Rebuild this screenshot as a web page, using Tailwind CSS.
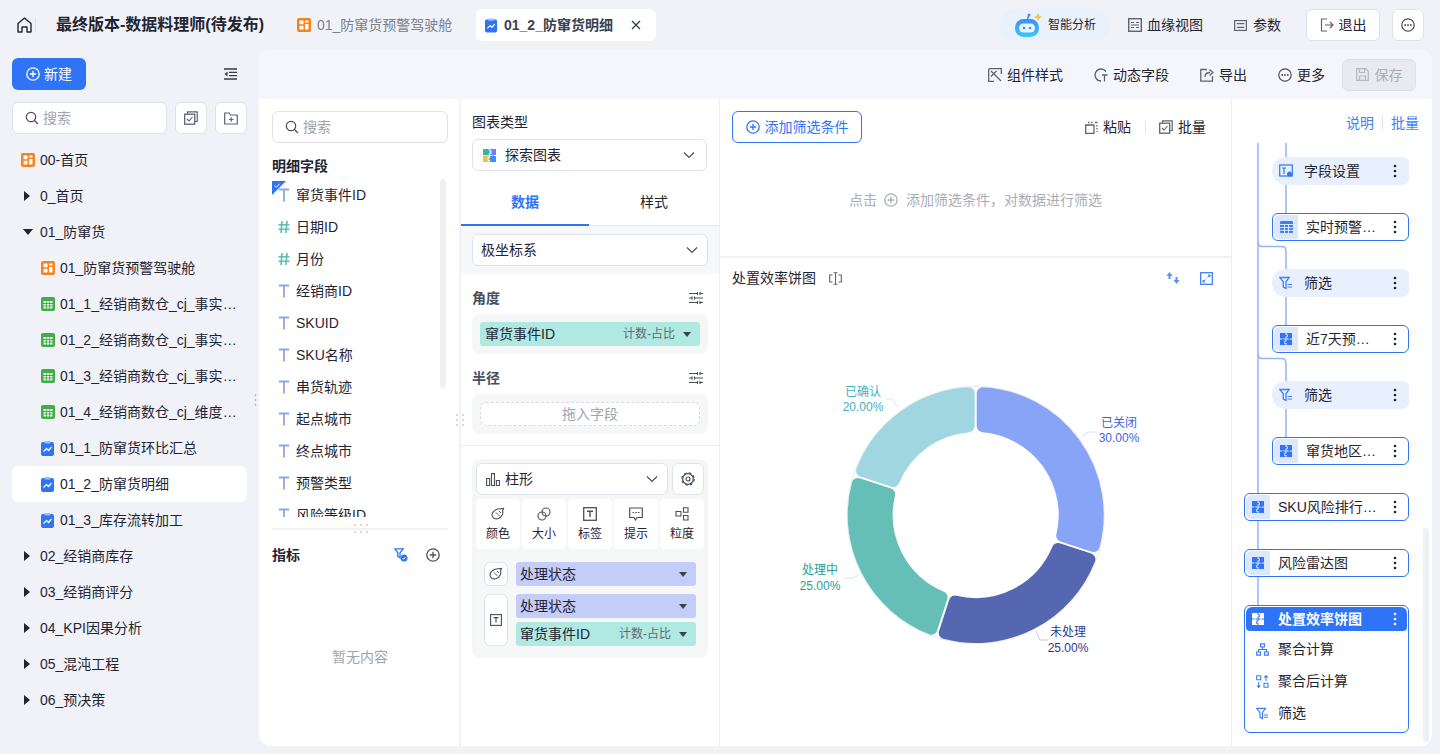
<!DOCTYPE html>
<html lang="zh-CN">
<head>
<meta charset="UTF-8">
<title>最终版本-数据料理师(待发布)</title>
<script src="https://cdn.jsdelivr.net/npm/@tailwindcss/browser@4"></script>
</head>
<body class="relative h-[754px] w-[1440px] overflow-hidden bg-[#f0f2f8] font-['Liberation_Sans','Noto_Sans_CJK_SC',sans-serif] text-sm text-[#1f2533]">

<!-- icon sprite -->
<svg class="hidden">
  <symbol id="i-dash" viewBox="0 0 14 14"><rect width="14" height="14" rx="2" fill="#f58220"/><path d="M2.500 2.500h4v3.800h-4zM8 2.500h3.500v2H8zM8 6h3.500v5.500H8zM2.500 7.800h4v3.700h-4z" fill="#fff"/></symbol>
  <symbol id="i-table" viewBox="0 0 14 14"><rect width="14" height="14" rx="2" fill="#3fae49"/><path d="M2.500 4h9v7.500h-9z" fill="#fff"/><path d="M2 6.500h10M2 9h10M5.300 4v8M8.700 4v8" stroke="#3fae49" stroke-width="1"/></symbol>
  <symbol id="i-chart" viewBox="0 0 14 15"><rect y="1" width="13" height="14" rx="2" fill="#2f74f6"/><rect x="3.500" width="6" height="2.500" rx="1" fill="#9dbdf9"/><path d="M2.500 10.500l3-3 2 2 3-3.500" fill="none" stroke="#fff" stroke-width="1.200"/></symbol>
  <symbol id="i-t" viewBox="0 0 12 14"><path d="M1 1.500h10M6 1.500v12" fill="none" stroke="#8ea8e0" stroke-width="1.800"/></symbol>
  <symbol id="i-hash" viewBox="0 0 12 14"><path d="M4 1L3 13M9 1L8 13M.5 4.800h11M.5 9.200h11" fill="none" stroke="#5bbcb0" stroke-width="1.600"/></symbol>
  <symbol id="i-search" viewBox="0 0 14 14"><circle cx="6" cy="6" r="4.700" fill="none" stroke="currentColor" stroke-width="1.200"/><path d="M9.500 9.500L13 13" stroke="currentColor" stroke-width="1.200"/></symbol>
  <symbol id="i-plus" viewBox="0 0 14 14"><circle cx="7" cy="7" r="6.200" fill="none" stroke="currentColor" stroke-width="1.300"/><path d="M3.800 7h6.400M7 3.800v6.400" stroke="currentColor" stroke-width="1.300"/></symbol>
  <symbol id="i-more" viewBox="0 0 14 14"><circle cx="7" cy="7" r="6.200" fill="none" stroke="currentColor" stroke-width="1.200"/><circle cx="4.200" cy="7" r=".9" fill="currentColor"/><circle cx="7" cy="7" r=".9" fill="currentColor"/><circle cx="9.800" cy="7" r=".9" fill="currentColor"/></symbol>
  <symbol id="i-batch" viewBox="0 0 14 14"><path d="M3.500 3V.8h9.700v9.700H11" fill="none" stroke="currentColor" stroke-width="1.200"/><rect x=".7" y="3.200" width="10" height="10" fill="none" stroke="currentColor" stroke-width="1.300"/><path d="M3 8l2 2 3.500-4" fill="none" stroke="currentColor" stroke-width="1.100"/></symbol>
  <symbol id="i-tune" viewBox="0 0 14 14"><path d="M0 2.500h8.500M11 2.500h3M0 7h3M5.500 7h8.500M0 11.500h8.500M11 11.500h3M8.500 1v3M11 1v3M3 5.500v3M5.500 5.500v3M8.500 10v3M11 10v3" fill="none" stroke="currentColor" stroke-width="1.200"/></symbol>
  <symbol id="i-chev" viewBox="0 0 12 8"><path d="M1 1.500l5 5 5-5" fill="none" stroke="currentColor" stroke-width="1.200"/></symbol>
  <symbol id="i-puzzle" viewBox="0 0 12 12"><g fill="currentColor"><path d="M0 0H5.500V2H6.800V3.500H5.500V5.500H0Z"/><path d="M6.500 0H12V5.500H10V6.200H8.500V5.500H6.500V4.300H7.800V1.200H6.500Z"/><path d="M0 0H5.500V2H6.800V3.500H5.500V5.500H0Z" transform="rotate(180 6 6)"/><path d="M6.500 0H12V5.500H10V6.200H8.500V5.500H6.500V4.300H7.800V1.200H6.500Z" transform="rotate(180 6 6)"/></g></symbol>
  <symbol id="i-filter" viewBox="0 0 14 14"><path d="M.8 1.500h9.400L7 5.800V12.500L4.300 11V5.800z" fill="none" stroke="currentColor" stroke-width="1.300"/><path d="M8.500 8.500h4.500M8.500 11h4.500" stroke="currentColor" stroke-width="1.100"/></symbol>
  <symbol id="i-palette" viewBox="0 0 14 14"><path d="M1 8c0-3 3-5.500 6-6l5.500-.5-1 2.500c1 2-.5 6-4 7.500C4 12.500 1 11 1 8z" fill="none" stroke="currentColor" stroke-width="1.100"/><path d="M5 5.500l3.500 3.500M8 4l2 2" stroke="currentColor" stroke-width=".9"/></symbol>
  <symbol id="i-box-t" viewBox="0 0 14 14"><rect x=".7" y=".7" width="12.600" height="12.600" fill="none" stroke="currentColor" stroke-width="1.300"/><path d="M4 4.300h6M7 4.300v5.700" fill="none" stroke="currentColor" stroke-width="1.400"/></symbol>
  <symbol id="i-dots" viewBox="0 0 4 14"><circle cx="2" cy="2" r="1.300" fill="currentColor"/><circle cx="2" cy="7" r="1.300" fill="currentColor"/><circle cx="2" cy="12" r="1.300" fill="currentColor"/></symbol>
</svg>

<!-- top bar -->
<header class="flex h-[50px] items-center">
  <svg class="ml-[17px] h-[16px] w-[15px]" viewBox="0 0 15 16"><path d="M1 6.500L7.500 1 14 6.500V15h-4V10H5v5H1z" fill="none" stroke="#1f2533" stroke-width="1.400" stroke-linejoin="round"/></svg>
  <span class="ml-[3px] h-[14px] w-px bg-[#e2e4ec]"></span>
  <h1 class="ml-[20px] w-[208px] text-base font-semibold whitespace-nowrap">最终版本-数据料理师(待发布)</h1>
  <div class="ml-[33px] flex w-[155px] items-center gap-[6px] text-[#7b808c]">
    <svg class="h-[14px] w-[14px] shrink-0"><use href="#i-dash"/></svg>
    <span class="whitespace-nowrap">01_防窜货预警驾驶舱</span>
  </div>
  <div class="ml-[24px] flex h-[32px] w-[180px] items-center rounded-md bg-white pl-[9px]">
    <svg class="h-[15px] w-[13px] shrink-0"><use href="#i-chart"/></svg>
    <span class="ml-[6px] w-[110px] overflow-hidden font-semibold whitespace-nowrap text-[#3b4150]">01_2_防窜货明细</span>
    <svg class="ml-[17px] h-[10px] w-[10px]" viewBox="0 0 10 10"><path d="M1 1l8 8M9 1L1 9" stroke="#333a48" stroke-width="1.200"/></svg>
  </div>
  <div class="ml-[344px] flex h-[32px] w-[110px] items-center rounded-2xl bg-[#e9f1fc] pl-[14px]">
    <svg class="h-[26px] w-[29px] shrink-0" viewBox="0 0 29 26">
      <defs><linearGradient id="rb" x1="0" y1="0" x2="0" y2="1"><stop offset="0" stop-color="#3d8ef8"/><stop offset="1" stop-color="#3cc8f6"/></linearGradient></defs>
      <path d="M13 8L15 3" stroke="#3d8ef8" stroke-width="1.500"/><circle cx="15" cy="3" r="1.500" fill="#3d8ef8"/>
      <path d="M24 1l1.200 2.800L28 5l-2.800 1.200L24 9l-1.200-2.800L20 5l2.800-1.200z" fill="#f8c13a"/>
      <rect x="1" y="7" width="24" height="18" rx="8.500" fill="url(#rb)"/>
      <rect x="5" y="11.500" width="16" height="9" rx="4.500" fill="#e8f5fe"/>
      <circle cx="10" cy="16" r="1.300" fill="#3d8ef8"/><circle cx="16" cy="16" r="1.300" fill="#3d8ef8"/>
    </svg>
    <span class="ml-[5px] text-xs whitespace-nowrap">智能分析</span>
  </div>
  <div class="ml-[18px] flex items-center gap-[5px]">
    <svg class="h-[14px] w-[14px]" viewBox="0 0 14 14"><rect x=".7" y=".7" width="12.600" height="12.600" fill="none" stroke="#5d6370" stroke-width="1.400"/><path d="M3 4.500h3M3 9.500h3M8 4.500h3M8 9.500h3M3 7h8" stroke="#5d6370" stroke-width="1.200"/></svg>
    <span>血缘视图</span>
  </div>
  <div class="ml-[31px] flex items-center gap-[6px]">
    <svg class="h-[13px] w-[13px]" viewBox="0 0 14 14"><rect x=".7" y="1.700" width="12.600" height="10.600" fill="none" stroke="#5d6370" stroke-width="1.300"/><path d="M3 5h8M3 9h8" stroke="#5d6370" stroke-width="1.200"/></svg>
    <span>参数</span>
  </div>
  <button class="ml-[25px] flex h-[32px] w-[74px] items-center justify-center gap-[5px] rounded-md border border-[#dfe2ea] bg-white">
    <svg class="h-[14px] w-[14px]" viewBox="0 0 14 14"><path d="M7 1H1.500v12H7M5 7h8M10 4l3 3-3 3" fill="none" stroke="#5d6370" stroke-width="1.200"/></svg>
    <span>退出</span>
  </button>
  <button class="ml-[12px] flex h-[32px] w-[32px] items-center justify-center rounded-md border border-[#dfe2ea] bg-white text-[#4a4f5c]">
    <svg class="h-[14px] w-[14px]"><use href="#i-more"/></svg>
  </button>
</header>

<div class="flex">
  <!-- sidebar -->
  <aside class="relative w-[259px] shrink-0 px-[12px] pt-[8px]">
    <div class="flex items-center justify-between">
      <button class="flex h-[32px] w-[74px] items-center justify-center gap-[4px] rounded-md bg-[#2f74f6] text-white">
        <svg class="h-[14px] w-[14px]"><use href="#i-plus"/></svg>新建
      </button>
      <svg class="mr-[10px] h-[12px] w-[13px]" viewBox="0 0 13 12"><path d="M0 1h13M5 4.300h8M5 7.700h8M0 11h13" stroke="#333a48" stroke-width="1.300"/><path d="M3.500 3.500L.5 6l3 2.500z" fill="#333a48"/></svg>
    </div>
    <div class="mt-[12px] flex gap-[8px]">
      <div class="flex h-[32px] w-[155px] items-center gap-[4px] rounded-md border border-[#dfe2ea] bg-white pl-[12px] text-[#a0a4ad]">
        <svg class="h-[14px] w-[14px] text-[#4a4f5c]"><use href="#i-search"/></svg>搜索
      </div>
      <button class="flex h-[32px] w-[32px] items-center justify-center rounded-md border border-[#dfe2ea] bg-white text-[#5d6370]"><svg class="h-[14px] w-[14px]"><use href="#i-batch"/></svg></button>
      <button class="flex h-[32px] w-[32px] items-center justify-center rounded-md border border-[#dfe2ea] bg-white">
        <svg class="h-[13px] w-[14px]" viewBox="0 0 14 13"><path d="M.7 1h4.500l1.300 2h6.800v9H.7z" fill="none" stroke="#5d6370" stroke-width="1.200"/><path d="M5 7.500h4.500M7.200 5.200v4.600" stroke="#5d6370" stroke-width="1.200"/></svg>
      </button>
    </div>
    <ul class="mt-[8px]">
      <li class="flex h-[36px] items-center pl-[9px]"><svg class="h-[14px] w-[14px] shrink-0"><use href="#i-dash"/></svg><span class="ml-[5px]">00-首页</span></li>
      <li class="flex h-[36px] items-center pl-[9px]"><span class="ml-[3px] h-0 w-0 border-y-[5px] border-l-[6px] border-y-transparent border-l-[#1f2533]"></span><span class="ml-[10px]">0_首页</span></li>
      <li class="flex h-[36px] items-center pl-[9px]"><span class="ml-[2px] h-0 w-0 border-x-[5px] border-t-[6px] border-x-transparent border-t-[#1f2533]"></span><span class="ml-[7px]">01_防窜货</span></li>
      <li class="flex h-[36px] items-center pl-[29px]"><svg class="h-[14px] w-[14px] shrink-0"><use href="#i-dash"/></svg><span class="ml-[5px]">01_防窜货预警驾驶舱</span></li>
      <li class="flex h-[36px] items-center pl-[29px]"><svg class="h-[14px] w-[14px] shrink-0"><use href="#i-table"/></svg><span class="ml-[5px] w-[177px] truncate">01_1_经销商数仓_cj_事实表明细</span></li>
      <li class="flex h-[36px] items-center pl-[29px]"><svg class="h-[14px] w-[14px] shrink-0"><use href="#i-table"/></svg><span class="ml-[5px] w-[177px] truncate">01_2_经销商数仓_cj_事实表汇总</span></li>
      <li class="flex h-[36px] items-center pl-[29px]"><svg class="h-[14px] w-[14px] shrink-0"><use href="#i-table"/></svg><span class="ml-[5px] w-[177px] truncate">01_3_经销商数仓_cj_事实表预警</span></li>
      <li class="flex h-[36px] items-center pl-[29px]"><svg class="h-[14px] w-[14px] shrink-0"><use href="#i-table"/></svg><span class="ml-[5px] w-[177px] truncate">01_4_经销商数仓_cj_维度表信息</span></li>
      <li class="flex h-[36px] items-center pl-[29px]"><svg class="h-[15px] w-[14px] shrink-0"><use href="#i-chart"/></svg><span class="ml-[5px]">01_1_防窜货环比汇总</span></li>
      <li class="flex h-[36px] items-center rounded-md bg-white pl-[29px]"><svg class="h-[15px] w-[14px] shrink-0"><use href="#i-chart"/></svg><span class="ml-[5px]">01_2_防窜货明细</span></li>
      <li class="flex h-[36px] items-center pl-[29px]"><svg class="h-[15px] w-[14px] shrink-0"><use href="#i-chart"/></svg><span class="ml-[5px]">01_3_库存流转加工</span></li>
      <li class="flex h-[36px] items-center pl-[9px]"><span class="ml-[3px] h-0 w-0 border-y-[5px] border-l-[6px] border-y-transparent border-l-[#1f2533]"></span><span class="ml-[10px]">02_经销商库存</span></li>
      <li class="flex h-[36px] items-center pl-[9px]"><span class="ml-[3px] h-0 w-0 border-y-[5px] border-l-[6px] border-y-transparent border-l-[#1f2533]"></span><span class="ml-[10px]">03_经销商评分</span></li>
      <li class="flex h-[36px] items-center pl-[9px]"><span class="ml-[3px] h-0 w-0 border-y-[5px] border-l-[6px] border-y-transparent border-l-[#1f2533]"></span><span class="ml-[10px]">04_KPI因果分析</span></li>
      <li class="flex h-[36px] items-center pl-[9px]"><span class="ml-[3px] h-0 w-0 border-y-[5px] border-l-[6px] border-y-transparent border-l-[#1f2533]"></span><span class="ml-[10px]">05_混沌工程</span></li>
      <li class="flex h-[36px] items-center pl-[9px]"><span class="ml-[3px] h-0 w-0 border-y-[5px] border-l-[6px] border-y-transparent border-l-[#1f2533]"></span><span class="ml-[10px]">06_预决策</span></li>
    </ul>
    <!-- resize handle -->
    <svg class="absolute top-[344px] left-[254px] h-[12px] w-[3px]" viewBox="0 0 3 12" fill="#9a9ea8"><circle cx="1.500" cy="1" r=".8"/><circle cx="1.500" cy="6" r=".8"/><circle cx="1.500" cy="11" r=".8"/></svg>
  </aside>

  <!-- main panel -->
  <main class="h-[696px] w-[1173px] overflow-hidden rounded-xl bg-white">
    <div class="flex h-[49px] items-center bg-[#f5f6fb]">
      <div class="ml-[729px] flex items-center gap-[5px]">
        <svg class="h-[14px] w-[14px]" viewBox="0 0 14 14"><path d="M.7.700h12.600V6M.7.700V13.300H6M3 3l10 10M3 8.500L8.500 3" fill="none" stroke="#5d6370" stroke-width="1.300"/></svg><span>组件样式</span>
      </div>
      <div class="ml-[31px] flex items-center gap-[5px]">
        <svg class="h-[14px] w-[14px]" viewBox="0 0 14 14"><path d="M12 3.500A6 6 0 1 0 7 13M8 7h5.500M10.500 7v6.500" fill="none" stroke="#5d6370" stroke-width="1.300"/></svg><span>动态字段</span>
      </div>
      <div class="ml-[31px] flex items-center gap-[5px]">
        <svg class="h-[14px] w-[14px]" viewBox="0 0 14 14"><path d="M7 1.500H.8v11.700h11.700V8M5 9c0-3 2-4.500 5-4.500M9.500 1.500l3.500 3-3.500 3" fill="none" stroke="#5d6370" stroke-width="1.300"/></svg><span>导出</span>
      </div>
      <div class="ml-[31px] flex items-center gap-[5px] text-[#4a4f5c]">
        <svg class="h-[14px] w-[14px]"><use href="#i-more"/></svg><span class="text-[#1f2533]">更多</span>
      </div>
      <button class="ml-[17px] flex h-[32px] w-[74px] items-center justify-center gap-[6px] rounded-md border border-[#dfe1e7] bg-[#e9eaef] text-[#a9adb6]">
        <svg class="h-[13px] w-[13px]" viewBox="0 0 13 13"><path d="M.7.700h9l2.600 2.600v9H.7zM3.500.700v3.800h5V.700M3.500 12.300V8h6v4.300" fill="none" stroke="#b4b7bf" stroke-width="1.200"/></svg>保存
      </button>
    </div>

    <div class="flex h-[647px]">
      <!-- field list -->
      <section class="relative w-[202px] shrink-0 border-r-2 border-[#f1f2f6] pl-[13px]">
        <div class="mt-[12px] flex h-[32px] w-[176px] items-center gap-[4px] rounded-md border border-[#dfe2ea] pl-[12px] text-[#a0a4ad]">
          <svg class="h-[14px] w-[14px] text-[#4a4f5c]"><use href="#i-search"/></svg>搜索
        </div>
        <h3 class="mt-[13px] h-[20px] leading-[20px] font-semibold">明细字段</h3>
        <div class="relative mt-[3px] h-[338px] overflow-hidden">
          <ul class="pl-[6px]">
            <li class="flex h-[32px] items-center"><svg class="h-[14px] w-[12px] shrink-0"><use href="#i-t"/></svg><span class="ml-[6px]">窜货事件ID</span></li>
            <li class="flex h-[32px] items-center"><svg class="h-[14px] w-[12px] shrink-0"><use href="#i-hash"/></svg><span class="ml-[6px]">日期ID</span></li>
            <li class="flex h-[32px] items-center"><svg class="h-[14px] w-[12px] shrink-0"><use href="#i-hash"/></svg><span class="ml-[6px]">月份</span></li>
            <li class="flex h-[32px] items-center"><svg class="h-[14px] w-[12px] shrink-0"><use href="#i-t"/></svg><span class="ml-[6px]">经销商ID</span></li>
            <li class="flex h-[32px] items-center"><svg class="h-[14px] w-[12px] shrink-0"><use href="#i-t"/></svg><span class="ml-[6px]">SKUID</span></li>
            <li class="flex h-[32px] items-center"><svg class="h-[14px] w-[12px] shrink-0"><use href="#i-t"/></svg><span class="ml-[6px]">SKU名称</span></li>
            <li class="flex h-[32px] items-center"><svg class="h-[14px] w-[12px] shrink-0"><use href="#i-t"/></svg><span class="ml-[6px]">串货轨迹</span></li>
            <li class="flex h-[32px] items-center"><svg class="h-[14px] w-[12px] shrink-0"><use href="#i-t"/></svg><span class="ml-[6px]">起点城市</span></li>
            <li class="flex h-[32px] items-center"><svg class="h-[14px] w-[12px] shrink-0"><use href="#i-t"/></svg><span class="ml-[6px]">终点城市</span></li>
            <li class="flex h-[32px] items-center"><svg class="h-[14px] w-[12px] shrink-0"><use href="#i-t"/></svg><span class="ml-[6px]">预警类型</span></li>
            <li class="flex h-[32px] items-center"><svg class="h-[14px] w-[12px] shrink-0"><use href="#i-t"/></svg><span class="ml-[6px]">风险等级ID</span></li>
          </ul>
          <svg class="absolute top-[2px] left-0 h-[14px] w-[14px]" viewBox="0 0 14 14"><path d="M0 0h14L0 14z" fill="#2f74f6"/><path d="M2.500 4.500l1.800 1.800 3.200-3.500" fill="none" stroke="#fff"/></svg>
          <span class="absolute top-0 right-[13px] h-[209px] w-[6px] rounded-full bg-[#eef0f4]"></span>
        </div>
        <div class="relative mt-[11px] h-[2px] w-[176px] bg-[#f1f2f5]">
          <svg class="absolute top-[-4px] left-[82px] h-[10px] w-[14px]" viewBox="0 0 14 10" fill="#a5a9b2"><circle cx="1" cy="1" r=".8"/><circle cx="7" cy="1" r=".8"/><circle cx="13" cy="1" r=".8"/><circle cx="1" cy="8" r=".8"/><circle cx="7" cy="8" r=".8"/><circle cx="13" cy="8" r=".8"/></svg>
        </div>
        <div class="mt-[15px] flex h-[20px] w-[176px] items-center justify-between pr-[8px]">
          <h3 class="font-semibold">指标</h3>
          <div class="flex items-center gap-[18px]">
            <svg class="h-[14px] w-[14px]" viewBox="0 0 14 14"><path d="M.8.800h8.400L6 4.800v5L3.800 8.500V4.800z" fill="none" stroke="#2f74f6" stroke-width="1.300"/><circle cx="10" cy="10" r="3.500" fill="#2f74f6"/><path d="M8.500 10l1.200 1.200L11.600 9" fill="none" stroke="#fff"/></svg>
            <svg class="h-[14px] w-[14px] text-[#4a4f5c]"><use href="#i-plus"/></svg>
          </div>
        </div>
        <p class="mt-[82px] w-[176px] text-center text-[#a0a4ad]">暂无内容</p>
        <svg class="absolute top-[315px] right-[-5px] h-[12px] w-[8px]" viewBox="0 0 8 12" fill="#a5a9b2"><circle cx="1" cy="1" r=".8"/><circle cx="7" cy="1" r=".8"/><circle cx="1" cy="6" r=".8"/><circle cx="7" cy="6" r=".8"/><circle cx="1" cy="11" r=".8"/><circle cx="7" cy="11" r=".8"/></svg>
      </section>

      <!-- chart settings -->
      <section class="w-[259px] shrink-0 border-r border-[#eceef3]">
        <div class="px-[11px]">
          <p class="mt-[13px] h-[20px] leading-[20px]">图表类型</p>
          <div class="mt-[7px] flex h-[32px] w-[235px] items-center rounded-md border border-[#dfe2ea] pl-[10px]">
            <svg class="h-[13px] w-[13px]" viewBox="0 0 12 12"><path d="M0 0H5.500V2H6.800V3.500H5.500V5.500H0Z" fill="#2fb6a6"/><path d="M6.500 0H12V5.500H10V6.200H8.500V5.500H6.500V4.300H7.800V1.200H6.500Z" fill="#6f7ef0"/><path d="M0 0H5.500V2H6.800V3.500H5.500V5.500H0Z" fill="#3d8ef8" transform="rotate(180 6 6)"/><path d="M6.500 0H12V5.500H10V6.200H8.500V5.500H6.500V4.300H7.800V1.200H6.500Z" fill="#f8b93c" transform="rotate(180 6 6)"/></svg>
            <span class="ml-[9px]">探索图表</span>
            <svg class="mr-[11px] ml-auto h-[8px] w-[12px] text-[#4a4f5c]"><use href="#i-chev"/></svg>
          </div>
        </div>
        <div class="mt-[8px] flex h-[47px] border-b border-[#e6e8ee]">
          <div class="relative flex w-[128px] items-center justify-center font-semibold text-[#2f74f6]">数据<span class="absolute right-0 bottom-[-1px] left-0 h-[2px] bg-[#2f74f6]"></span></div>
          <div class="flex w-[130px] items-center justify-center">样式</div>
        </div>
        <div class="h-[48px] bg-[#f6f7f9] px-[11px] pt-[8px]">
          <div class="flex h-[32px] w-[236px] items-center rounded-md border border-[#dfe2ea] bg-white pl-[8px]">
            <span>极坐标系</span>
            <svg class="mr-[9px] ml-auto h-[8px] w-[12px] text-[#4a4f5c]"><use href="#i-chev"/></svg>
          </div>
        </div>
        <div class="h-[172px] border-b border-[#eceef3] px-[11px] pt-[14px]">
          <div class="flex h-[20px] items-center justify-between pr-[5px]">
            <h4 class="font-semibold text-[#4a4f5c]">角度</h4>
            <svg class="h-[14px] w-[14px] text-[#4a4f5c]"><use href="#i-tune"/></svg>
          </div>
          <div class="mt-[6px] h-[40px] w-[236px] rounded-lg bg-[#f5f6f8] p-[8px]">
            <div class="flex h-[24px] items-center rounded-[3px] bg-[#b0e8e2] pr-[9px] pl-[5px]">
              <span>窜货事件ID</span>
              <span class="ml-auto text-xs text-[#5f6b74]">计数-占比</span>
              <span class="ml-[8px] h-0 w-0 border-x-[4px] border-t-[5px] border-x-transparent border-t-[#3b4150]"></span>
            </div>
          </div>
          <div class="mt-[14px] flex h-[20px] items-center justify-between pr-[5px]">
            <h4 class="font-semibold text-[#4a4f5c]">半径</h4>
            <svg class="h-[14px] w-[14px] text-[#4a4f5c]"><use href="#i-tune"/></svg>
          </div>
          <div class="mt-[6px] h-[40px] w-[236px] rounded-lg bg-[#f5f6f8] p-[8px]">
            <div class="flex h-[24px] items-center justify-center rounded-md border border-dashed border-[#d7dae1] bg-white text-[#a0a4ad]">拖入字段</div>
          </div>
        </div>
        <div class="mx-[11px] mt-[13px] h-[199px] w-[236px] rounded-lg bg-[#f5f6f8] p-[4px]">
          <div class="flex gap-[4px]">
            <div class="flex h-[32px] w-[192px] items-center rounded-md border border-[#dfe2ea] bg-white pl-[9px]">
              <svg class="h-[13px] w-[14px]" viewBox="0 0 14 13"><path d="M.6 5.500h3V12.500h-3zM5.500.600h3V12.500h-3zM10.400 7.500h3V12.500h-3z" fill="none" stroke="#4a4f5c" stroke-width="1.100"/></svg>
              <span class="ml-[5px]">柱形</span>
              <svg class="mr-[9px] ml-auto h-[8px] w-[12px] text-[#4a4f5c]"><use href="#i-chev"/></svg>
            </div>
            <div class="flex h-[32px] w-[32px] items-center justify-center rounded-md border border-[#dfe2ea] bg-white">
              <svg class="h-[14px] w-[14px]" viewBox="0 0 14 14" fill="none" stroke="#4a4f5c"><circle cx="7" cy="7" r="5.300" stroke-width="1.200"/><circle cx="7" cy="7" r="6.200" stroke-width="1.200" stroke-dasharray="2.600 2.270"/><circle cx="7" cy="7" r="2" stroke-width="1.200"/></svg>
            </div>
          </div>
          <div class="mt-[4px] flex gap-[2px] text-xs">
            <div class="flex h-[50px] w-[44px] flex-col items-center justify-center gap-[5px] rounded-sm bg-white"><svg class="h-[14px] w-[14px] text-[#4a4f5c]"><use href="#i-palette"/></svg>颜色</div>
            <div class="flex h-[50px] w-[44px] flex-col items-center justify-center gap-[5px] rounded-sm bg-white"><svg class="h-[14px] w-[14px]" viewBox="0 0 14 14"><circle cx="5" cy="9" r="4" fill="none" stroke="#4a4f5c" stroke-width="1.100"/><circle cx="9" cy="5" r="4" fill="none" stroke="#4a4f5c" stroke-width="1.100"/></svg>大小</div>
            <div class="flex h-[50px] w-[44px] flex-col items-center justify-center gap-[5px] rounded-sm bg-white"><svg class="h-[14px] w-[14px] text-[#4a4f5c]"><use href="#i-box-t"/></svg>标签</div>
            <div class="flex h-[50px] w-[44px] flex-col items-center justify-center gap-[5px] rounded-sm bg-white"><svg class="h-[14px] w-[14px]" viewBox="0 0 14 14"><path d="M.7 1h12.600v9.500H8L6.500 13 5 10.500H.7z" fill="none" stroke="#4a4f5c" stroke-width="1.200"/><path d="M3.500 5.500h1.500M6.300 5.500h1.500M9 5.500h1.500" stroke="#4a4f5c" stroke-width="1.200"/></svg>提示</div>
            <div class="flex h-[50px] w-[44px] flex-col items-center justify-center gap-[5px] rounded-sm bg-white"><svg class="h-[14px] w-[14px]" viewBox="0 0 14 14"><path d="M1 4.500h5V9H1zM8.500.800h4.500v4.500H8.500zM8.500 8.500h4.500V13H8.500z" fill="none" stroke="#4a4f5c" stroke-width="1.100"/></svg>粒度</div>
          </div>
          <div class="mt-[4px] flex h-[101px] flex-col gap-[8px] rounded-sm bg-[#f6f7f9] px-[8px] pt-[9px]">
            <div class="flex gap-[8px]">
              <div class="flex h-[24px] w-[24px] items-center justify-center rounded-md border border-[#dfe2ea] bg-white"><svg class="h-[14px] w-[14px] text-[#4a4f5c]"><use href="#i-palette"/></svg></div>
              <div class="flex h-[24px] w-[180px] items-center rounded-[3px] bg-[#c3cdf8] pr-[9px] pl-[4px]">处理状态<span class="ml-auto h-0 w-0 border-x-[4px] border-t-[5px] border-x-transparent border-t-[#3b4150]"></span></div>
            </div>
            <div class="flex gap-[8px]">
              <div class="flex h-[52px] w-[24px] items-center justify-center rounded-md border border-[#dfe2ea] bg-white"><svg class="h-[12px] w-[12px] text-[#4a4f5c]"><use href="#i-box-t"/></svg></div>
              <div class="flex w-[180px] flex-col gap-[4px]">
                <div class="flex h-[24px] items-center rounded-[3px] bg-[#c3cdf8] pr-[9px] pl-[4px]">处理状态<span class="ml-auto h-0 w-0 border-x-[4px] border-t-[5px] border-x-transparent border-t-[#3b4150]"></span></div>
                <div class="flex h-[24px] items-center rounded-[3px] bg-[#b0e8e2] pr-[9px] pl-[4px]">窜货事件ID<span class="ml-auto text-xs text-[#5f6b74]">计数-占比</span><span class="ml-[8px] h-0 w-0 border-x-[4px] border-t-[5px] border-x-transparent border-t-[#3b4150]"></span></div>
              </div>
            </div>
          </div>
        </div>
      </section>

      <!-- filter and chart -->
      <section class="w-[512px] shrink-0 border-r border-[#eceef3]">
        <div class="h-[159px] border-b-2 border-[#f1f2f5] pt-[12px]">
          <div class="flex items-center px-[12px]">
            <button class="flex h-[32px] w-[130px] items-center justify-center gap-[5px] rounded-md border border-[#2f74f6] text-[#2f74f6]">
              <svg class="h-[14px] w-[14px]"><use href="#i-plus"/></svg>添加筛选条件
            </button>
            <div class="ml-auto flex items-center pr-[13px]">
              <svg class="h-[13px] w-[13px]" viewBox="0 0 13 13"><path d="M9.500 4H.7v8.300H9V4" fill="none" stroke="#5d6370" stroke-width="1.300"/><path d="M3 1.500h1.500M6 1.500h1.500M10 1.500h2.500M12 4v1.500M12 7v1.500M12 10v1" stroke="#5d6370" stroke-width="1.300"/></svg>
              <span class="ml-[5px]">粘贴</span>
              <span class="mr-[13px] ml-[14px] h-[12px] w-px bg-[#e2e4ec]"></span>
              <svg class="h-[14px] w-[14px] text-[#5d6370]"><use href="#i-batch"/></svg>
              <span class="ml-[5px]">批量</span>
            </div>
          </div>
          <div class="mt-[47px] flex items-center pl-[129px] text-[#a9adb6]">
            <span>点击</span>
            <svg class="ml-[7px] h-[14px] w-[14px] text-[#a9adb6]"><use href="#i-plus"/></svg>
            <span class="ml-[8px]">添加筛选条件，对数据进行筛选</span>
          </div>
        </div>
        <div class="flex h-[40px] items-center px-[12px]">
          <span>处置效率饼图</span>
          <svg class="ml-[13px] h-[13px] w-[13px]" viewBox="0 0 13 13"><path d="M3.500 3H.7v7h2.800M9.500 3h2.800v7H9.500M6.500.7v11.600M4.500.7h4M4.500 12.300h4" fill="none" stroke="#5d6370" stroke-width="1.100"/></svg>
          <svg class="ml-auto h-[14px] w-[14px]" viewBox="0 0 14 14"><path d="M3.500 1L.5 5h2v3h2V5h2zM10.500 13l3-4h-2V6h-2v3h-2z" fill="#5b8ff5"/></svg>
          <svg class="mr-[6px] ml-[20px] h-[13px] w-[13px]" viewBox="0 0 13 13"><rect x=".7" y=".7" width="11.600" height="11.600" fill="none" stroke="#2f74f6" stroke-width="1.200"/><path d="M7.500 5.500l2.500-2.500M8 3h2v2M5.500 7.500l-2.500 2.500M3 8v2h2" fill="none" stroke="#2f74f6"/></svg>
        </div>
        <!-- donut -->
        <svg id="donut" class="block" width="511" height="448" viewBox="720 298 511 448">
          <circle cx="975.700" cy="515" r="128.500" fill="none" stroke="#e8eaf2"/>
          <g id="slices"></g>
          <g fill="none" stroke-width="1">
            <path d="M1082 437l6-5h9" stroke="#d5dcfb"/>
            <path d="M1036 631l4 9h8" stroke="#c5cae0"/>
            <path d="M859 575l-6 3h-9" stroke="#c9eae5"/>
            <path d="M898 407l-6-8h-6" stroke="#d0ecf0"/>
          </g>
          <g font-size="12" text-anchor="middle">
            <text x="1119" y="427" fill="#3f63e0">已关闭</text><text x="1119" y="442" fill="#3f63e0">30.00%</text>
            <text x="1068" y="636" fill="#2a3a8f">未处理</text><text x="1068" y="652" fill="#2a3a8f">25.00%</text>
            <text x="820" y="574" fill="#2a9d93">处理中</text><text x="820" y="590" fill="#2a9d93">25.00%</text>
            <text x="863" y="396" fill="#3fb0bf">已确认</text><text x="863" y="411" fill="#3fb0bf">20.00%</text>
          </g>
        </svg>
      </section>

      <!-- flow -->
      <section class="relative flex-1">
        <div class="flex h-[44px] items-center justify-end pt-[4px] pr-[13px] text-[#3f7ff5]">
          <span>说明</span><span class="mx-[8px] h-[14px] w-px bg-[#e2e4ec]"></span><span>批量</span>
        </div>
        <svg class="absolute top-[44px] left-0" width="180" height="470" fill="none" stroke="#93b5f7" stroke-width="1.500">
          <path d="M26 0V462"/>
          <path d="M54 0V70"/>
          <path d="M26 99q0 4.500 4.500 4.500h19q4.500 0 4.500 4.500V182"/>
          <path d="M26 211q0 4.500 4.500 4.500h19q4.500 0 4.500 4.500V294"/>
        </svg>
        <div class="relative flex flex-col gap-[28px] pt-[14px]">
          <div class="ml-[40px] flex h-[28px] w-[137px] items-center rounded-l-[14px] rounded-r-md bg-[#e9f0fd] pr-[12px] pl-[7px]">
            <svg class="h-[14px] w-[14px]" viewBox="0 0 14 14"><rect x=".7" y="1" width="12.600" height="11" fill="none" stroke="#2f74f6" stroke-width="1.200"/><path d="M3 4h4M5 4v6" stroke="#2f74f6" stroke-width="1.200"/><circle cx="10.500" cy="10" r="2.500" fill="#2f74f6"/></svg>
            <span class="ml-[11px]">字段设置</span>
            <svg class="ml-auto h-[14px] w-[4px]"><use href="#i-dots"/></svg>
          </div>
          <div class="ml-[40px] flex h-[28px] w-[137px] items-center rounded-md border border-[#2f74f6] bg-white pr-[11px]">
            <span class="ml-px flex h-[24px] w-[24px] shrink-0 items-center justify-center rounded-l-md bg-[#dce7fc]"><svg class="h-[12px] w-[13px]" viewBox="0 0 13 12"><rect width="13" height="12" rx="1" fill="#3f7ff5"/><path d="M0 3.500h13M0 6.500h13M0 9.300h13M4.500 3.500V12M8.500 3.500V12" stroke="#fff" stroke-width=".8"/></svg></span>
            <span class="ml-[8px] w-[70px] truncate">实时预警明细表</span>
            <svg class="ml-auto h-[14px] w-[4px]"><use href="#i-dots"/></svg>
          </div>
          <div class="ml-[40px] flex h-[28px] w-[137px] items-center rounded-l-[14px] rounded-r-md bg-[#e9f0fd] pr-[12px] pl-[7px]">
            <svg class="h-[14px] w-[14px] text-[#3f7ff5]"><use href="#i-filter"/></svg>
            <span class="ml-[11px]">筛选</span>
            <svg class="ml-auto h-[14px] w-[4px]"><use href="#i-dots"/></svg>
          </div>
          <div class="ml-[40px] flex h-[28px] w-[137px] items-center rounded-md border border-[#2f74f6] bg-white pr-[11px]">
            <span class="ml-px flex h-[24px] w-[24px] shrink-0 items-center justify-center rounded-l-md bg-[#dce7fc] text-[#2f74f6]"><svg class="h-[12px] w-[12px]"><use href="#i-puzzle"/></svg></span>
            <span class="ml-[8px] w-[64px] truncate">近7天预警趋势图</span>
            <svg class="ml-auto h-[14px] w-[4px]"><use href="#i-dots"/></svg>
          </div>
          <div class="ml-[40px] flex h-[28px] w-[137px] items-center rounded-l-[14px] rounded-r-md bg-[#e9f0fd] pr-[12px] pl-[7px]">
            <svg class="h-[14px] w-[14px] text-[#3f7ff5]"><use href="#i-filter"/></svg>
            <span class="ml-[11px]">筛选</span>
            <svg class="ml-auto h-[14px] w-[4px]"><use href="#i-dots"/></svg>
          </div>
          <div class="ml-[40px] flex h-[28px] w-[137px] items-center rounded-md border border-[#2f74f6] bg-white pr-[11px]">
            <span class="ml-px flex h-[24px] w-[24px] shrink-0 items-center justify-center rounded-l-md bg-[#dce7fc] text-[#2f74f6]"><svg class="h-[12px] w-[12px]"><use href="#i-puzzle"/></svg></span>
            <span class="ml-[8px] w-[70px] truncate">窜货地区分布图</span>
            <svg class="ml-auto h-[14px] w-[4px]"><use href="#i-dots"/></svg>
          </div>
          <div class="ml-[12px] flex h-[28px] w-[165px] items-center rounded-md border border-[#2f74f6] bg-white pr-[11px]">
            <span class="ml-px flex h-[24px] w-[24px] shrink-0 items-center justify-center rounded-l-md bg-[#dce7fc] text-[#2f74f6]"><svg class="h-[12px] w-[12px]"><use href="#i-puzzle"/></svg></span>
            <span class="ml-[8px] w-[99px] truncate">SKU风险排行榜图表</span>
            <svg class="ml-auto h-[14px] w-[4px]"><use href="#i-dots"/></svg>
          </div>
          <div class="ml-[12px] flex h-[28px] w-[165px] items-center rounded-md border border-[#2f74f6] bg-white pr-[11px]">
            <span class="ml-px flex h-[24px] w-[24px] shrink-0 items-center justify-center rounded-l-md bg-[#dce7fc] text-[#2f74f6]"><svg class="h-[12px] w-[12px]"><use href="#i-puzzle"/></svg></span>
            <span class="ml-[8px]">风险雷达图</span>
            <svg class="ml-auto h-[14px] w-[4px]"><use href="#i-dots"/></svg>
          </div>
          <div class="ml-[12px] h-[128px] w-[165px] rounded-md border border-[#2f74f6] bg-white p-px">
            <div class="flex h-[24px] items-center rounded-t-md rounded-b-sm bg-[#2f74f6] pr-[10px] pl-[6px] text-white">
              <svg class="h-[12px] w-[12px] text-white"><use href="#i-puzzle"/></svg>
              <span class="ml-[14px] font-semibold">处置效率饼图</span>
              <svg class="ml-auto h-[14px] w-[4px]"><use href="#i-dots"/></svg>
            </div>
            <div class="mt-[2px] flex h-[32px] items-center pl-[10px]">
              <svg class="h-[13px] w-[13px]" viewBox="0 0 13 13"><path d="M4.500.8h4v3h-4zM.7 9h3.800v3.200H.7zM8.500 9h3.800v3.200H8.500zM6.500 3.800v2.700M2.600 9V6.500h7.800V9" fill="none" stroke="#3f7ff5" stroke-width="1.200"/></svg>
              <span class="ml-[9px]">聚合计算</span>
            </div>
            <div class="flex h-[32px] items-center pl-[10px]">
              <svg class="h-[13px] w-[13px]" viewBox="0 0 13 13"><path d="M.7.700h4v4h-4zM8 8.300h4v4H8zM2.700 7v5.500M1 10.500l1.700 2 1.700-2M10 6V.7M8.300 2.500L10 .7l1.700 1.800" fill="none" stroke="#3f7ff5" stroke-width="1.100"/></svg>
              <span class="ml-[9px]">聚合后计算</span>
            </div>
            <div class="flex h-[32px] items-center pl-[10px]">
              <svg class="h-[13px] w-[13px] text-[#3f7ff5]"><use href="#i-filter"/></svg>
              <span class="ml-[9px]">筛选</span>
            </div>
          </div>
        </div>
        <span class="absolute top-[429px] right-[3px] h-[214px] w-[6px] rounded-full bg-[#eef0f4]"></span>
      </section>
    </div>
  </main>
</div>

<script>
  // donut slices, rounded corners come from the round stroke join
  const cx = 975.7, cy = 515, R = 128, r = 83, round = 6, gap = 1;
  const data = [
    { pct: 30, color: "#87a4f7" },
    { pct: 25, color: "#5467b0" },
    { pct: 25, color: "#65bfb7" },
    { pct: 20, color: "#9fd6df" },
  ];
  const pt = (rad, a) => `${(cx + rad * Math.sin(a)).toFixed(2)} ${(cy - rad * Math.cos(a)).toFixed(2)}`;
  let start = 0;
  data.forEach(d => {
    const end = start + d.pct / 100 * Math.PI * 2;
    const ro = R - round, ri = r + round;
    const dOut = Math.asin((round + gap) / ro), dIn = Math.asin((round + gap) / ri);
    const path = document.createElementNS("http://www.w3.org/2000/svg", "path");
    path.setAttribute("d", `M${pt(ro, start + dOut)}A${ro} ${ro} 0 ${d.pct > 50 ? 1 : 0} 1 ${pt(ro, end - dOut)}L${pt(ri, end - dIn)}A${ri} ${ri} 0 ${d.pct > 50 ? 1 : 0} 0 ${pt(ri, start + dIn)}Z`);
    path.setAttribute("fill", d.color);
    path.setAttribute("stroke", d.color);
    path.setAttribute("stroke-width", round * 2);
    path.setAttribute("stroke-linejoin", "round");
    document.getElementById("slices").appendChild(path);
    start = end;
  });
</script>
</body>
</html>
